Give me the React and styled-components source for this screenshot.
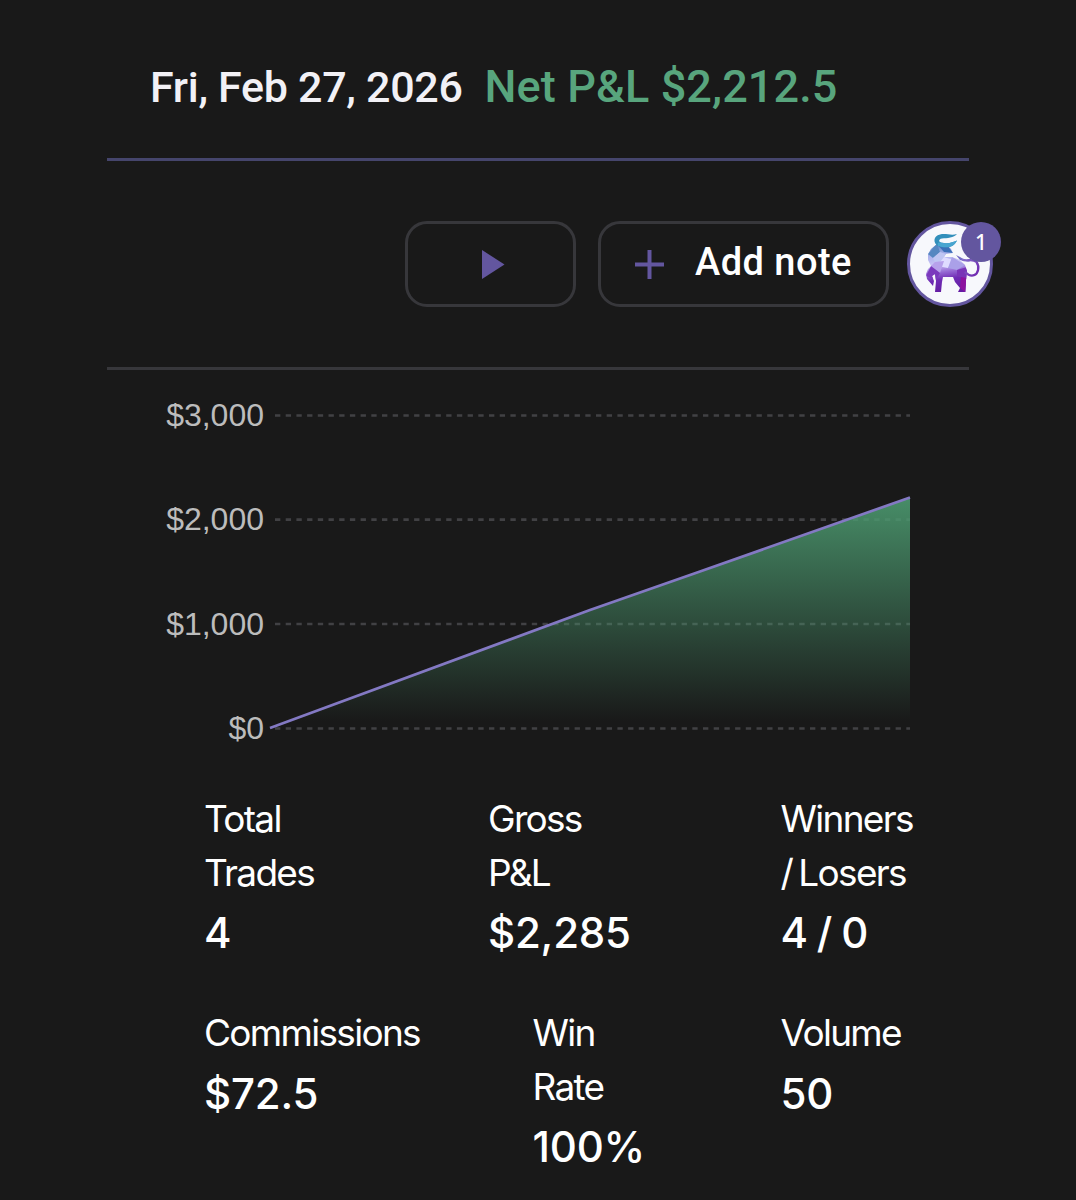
import React from "react";
import styled, { createGlobalStyle } from 'styled-components';

const GlobalStyle = createGlobalStyle`
  body {
    margin: 0;
    background: #191919;
  }
  *, *::before, *::after {
    box-sizing: border-box;
  }
`

const Page = styled.main`
  height: 1200px;
  overflow: hidden;
  padding: 0 107px;
  background: #191919;
  color: #fff;
  font-family: Roboto, "Liberation Sans", sans-serif;
`

const Header = styled.header`
  display: flex;
  align-items: baseline;
  gap: 22px;
  height: 161px;
  padding: 61px 0 0 43px;
  border-bottom: 3px solid #45456c;
`

const DateText = styled.h1`
  margin: 0;
  color: #f2f1f6;
  font-size: 43px;
  font-weight: 500;
  line-height: 52px;
  letter-spacing: -0.3px;
  white-space: nowrap;
`

const NetText = styled.span`
  color: #58a57d;
  font-size: 45px;
  font-weight: 500;
  line-height: 52px;
  letter-spacing: 0.1px;
  white-space: nowrap;
`

const Toolbar = styled.div`
  display: flex;
  justify-content: flex-end;
  height: 209px;
  padding-top: 60px;
  margin-right: -24px;
`

const Divider = styled.hr`
  height: 3px;
  margin: -3px 0 0;
  border: 0;
  background: #37373b;
`

const OutlineButton = styled.button`
  display: flex;
  align-items: center;
  justify-content: center;
  width: ${props => props.$width}px;
  height: 86px;
  margin-right: ${props => props.$gap}px;
  padding: 1px 0 0;
  border: 3px solid #37373b;
  border-radius: 22px;
  background: none;
  color: #fff;
  font: 500 38px/44px Roboto, sans-serif;
  letter-spacing: 0.45px;
`

const ButtonLabel = styled.span`
  margin: 0 0 6px 31px;
`

const AvatarWrap = styled.div`
  position: relative;
  width: 86px;
  height: 86px;
`

const Avatar = styled.div`
  width: 86px;
  height: 86px;
  border: 3px solid #63569f;
  border-radius: 50%;
  background: #f7f8fc;
  overflow: hidden;
`

const Badge = styled.span`
  position: absolute;
  top: 1px;
  right: -8px;
  width: 40px;
  height: 40px;
  border-radius: 50%;
  background: #63569f;
  font-family: "Noto Sans", sans-serif;
  font-size: 21px;
  font-weight: 500;
  line-height: 41px;
  text-align: center;
`

const ChartSvg = styled.svg`
  display: block;
  width: 862px;
  height: 390px;
  font-family: "Liberation Sans", Arial, sans-serif;
  font-size: 32px;
`

const StatRow = styled.div`
  display: grid;
  grid-template-columns: ${props => props.$columns};
  height: 214px;
  padding: 32px 0 0 97px;
`

const Stat = styled.div`
  font-family: Inter, sans-serif;
  white-space: pre-line;
`

const StatLabel = styled.div`
  font-size: 37px;
  line-height: 53.5px;
  letter-spacing: -1.7px;
  word-spacing: -2.5px;
`

const StatValue = styled.div`
  padding-top: 2px;
  font-size: 42px;
  font-weight: 500;
  line-height: 64px;
  letter-spacing: -0.2px;
  word-spacing: -2px;
`

const ticks = [
  { label: '$3,000', y: 45.5 },
  { label: '$2,000', y: 149.7 },
  { label: '$1,000', y: 254 },
  { label: '$0', y: 358.5 },
]

const rows = [
  {
    columns: '284px 292.5px auto',
    stats: [
      { label: 'Total\nTrades', value: '4' },
      { label: 'Gross\nP&L', value: '$2,285' },
      { label: 'Winners\n/ Losers', value: '4 / 0' },
    ],
  },
  {
    columns: '328.5px 248px auto',
    stats: [
      { label: 'Commissions', value: '$72.5' },
      { label: 'Win\nRate', value: '100%' },
      { label: 'Volume', value: '50' },
    ],
  },
]

const PlayIcon = () => (
  <svg width='28' height='29' viewBox='0 0 28 29'>
    <path d='M5 0 27.5 14.5 5 29z' fill='#63569f' />
  </svg>
)

const PlusIcon = () => (
  <svg width='29' height='29' viewBox='0 0 29 29'>
    <path d='M14.5 0v29M0 14.5h29' stroke='#63569f' strokeWidth='4' />
  </svg>
)

// low-poly bull, drawn on the 80x80 inner circle of the avatar
const BullLogo = () => (
  <svg width='80' height='80' viewBox='0 0 80 80'>
    <defs>
      <linearGradient id='bull' x1='25' y1='20' x2='32' y2='68' gradientUnits='userSpaceOnUse'>
        <stop offset='0' stopColor='#4f7fbd' />
        <stop offset='.22' stopColor='#a9b1ea' />
        <stop offset='.42' stopColor='#c9c3f7' />
        <stop offset='.6' stopColor='#9467d2' />
        <stop offset='.75' stopColor='#6f2bb4' />
        <stop offset='1' stopColor='#641ca3' />
      </linearGradient>
      <linearGradient id='tail' x1='46' y1='32' x2='69' y2='50' gradientUnits='userSpaceOnUse'>
        <stop offset='0' stopColor='#8b88d6' />
        <stop offset='1' stopColor='#6f24ae' />
      </linearGradient>
      <clipPath id='body'>
        <path d='M27 20 37 21 41 25 43 29 36 30 34 33 42 33 50 36 55 41 57 47 56 56 55.5 68H48L50 64 45 58 43 53H33L32 58 31 68H25L26 57 25 50 22 52 24 57 23 62 17 55 16 50 18 45 21 42 18 36 18 30 21 25z' />
      </clipPath>
    </defs>
    <g clipPath='url(#body)'>
      <path d='M15 18H60V69H15z' fill='url(#bull)' />
      <path d='M27 20 37 21 43 29 34 28z' fill='#3b70b8' />
      <path d='M18 30 27 20 30 28 23 34z' fill='#5587c1' />
      <path d='M30 28 36 30 34 37 25 38 23 34z' fill='#bfc6f3' />
      <path d='M34 33 43 36 38 44 27 42z' fill='#dfdcff' />
      <path d='M42 33 55 41 47 46 38 44z' fill='#aaa0e8' />
      <path d='M25 38 34 37 30 49 21 42z' fill='#b7a1eb' />
      <path d='M47 46 57 43 57 55 47 52z' fill='#7934b7' />
      <path d='M21 42 30 49 26 56 16 52z' fill='#7b39bd' />
      <path d='M51 53 57 54 55 68 50 64z' fill='#8d139f' />
    </g>
    <path d='M28 22C23 19 23 12 30 10.5C36 9 41 12 47 10C44 14 37 14 32 14.5C28 15 28 19 34 19C39 20 43 18 47 16.5C44 23 37 25 28 22z' fill='#328fbb' />
    <path d='M28 22C27 17 29 19 34 19C39 20 43 18 47 16.5C44 23 37 25 28 22z' fill='#48a5d0' />
    <path d='M46 31 50 33 55 36 61 38 50 36z' fill='#736bc4' />
    <path
      d='M52 35.5C57 38 62 34 66.5 38C70 43 68 50 64 51.2C60 52.5 57 50 55 48'
      fill='none'
      stroke='url(#tail)'
      strokeWidth='2.3'
    />
  </svg>
)

const Chart = () => (
  <ChartSvg viewBox='0 0 862 390'>
    <defs>
      <linearGradient id='area' x1='0' y1='128' x2='0' y2='358' gradientUnits='userSpaceOnUse'>
        <stop offset='0' stopColor='#4c9a70' stopOpacity='.9' />
        <stop offset='.97' stopColor='#4c9a70' stopOpacity='0' />
      </linearGradient>
    </defs>
    {ticks.map(({ label, y }) => (
      <g key={label}>
        <text x='157' y={y + 10.5} textAnchor='end' fill='#bcbcbc'>{label}</text>
        <path d={`M168 ${y}H803`} stroke='#414144' strokeWidth='2.7' strokeDasharray='5.35 5.35' />
      </g>
    ))}
    <path d='M163 358 483 240 593 201.5 803 127.5V358z' fill='url(#area)' />
    <path d='M163 358 483 240 593 201.5 803 127.5' fill='none' stroke='#8379c3' strokeWidth='2.7' />
  </ChartSvg>
)

const App = () => {
  return (
    <>
      <GlobalStyle />
      <Page>
        <Header>
          <DateText>Fri, Feb 27, 2026</DateText>
          <NetText>Net P&amp;L $2,212.5</NetText>
        </Header>
        <Toolbar>
          <OutlineButton $width={171} $gap={22} aria-label='Play'>
            <PlayIcon />
          </OutlineButton>
          <OutlineButton $width={291} $gap={18}>
            <PlusIcon />
            <ButtonLabel>Add note</ButtonLabel>
          </OutlineButton>
          <AvatarWrap>
            <Avatar><BullLogo /></Avatar>
            <Badge>1</Badge>
          </AvatarWrap>
        </Toolbar>
        <Divider />
        <Chart />
        {rows.map(row => (
          <StatRow key={row.columns} $columns={row.columns}>
            {row.stats.map(({ label, value }) => (
              <Stat key={label}>
                <StatLabel>{label}</StatLabel>
                <StatValue>{value}</StatValue>
              </Stat>
            ))}
          </StatRow>
        ))}
      </Page>
    </>
  );
};

export default App;
